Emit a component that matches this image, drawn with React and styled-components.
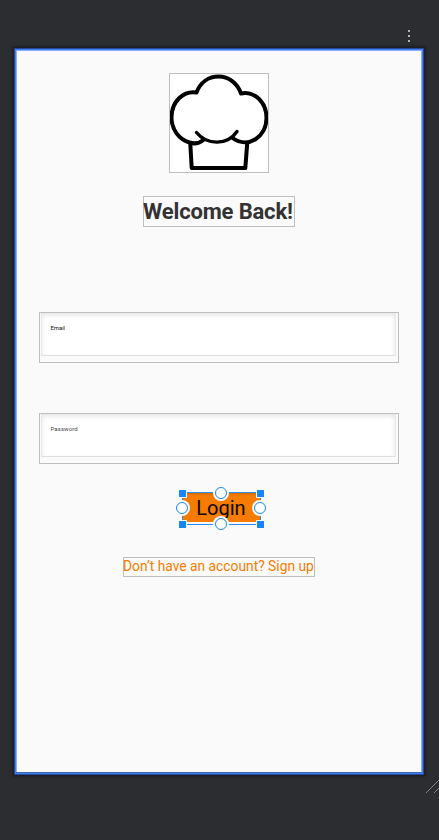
import React from "react";
import styled, { createGlobalStyle } from "styled-components";

const GlobalStyle = createGlobalStyle`
  *, *::before, *::after { box-sizing: border-box; }
  body { margin: 0; background: #2b2d30; font-family: Roboto, sans-serif; }
`;

const Workspace = styled.main`
  position: relative;
  width: 439px;
  height: 840px;
  overflow: hidden;
  display: flex;
  flex-direction: column;
  background: #2b2d30;
`;

const Toolbar = styled.header`
  height: 48px;
  flex: none;
  display: flex;
  justify-content: flex-end;
  padding: 30px 29px 0 0;
`;

const KebabMenu = styled.div`
  width: 2px;
  display: flex;
  flex-direction: column;
  gap: 3px;
`;

const Dot = styled.i`
  width: 2px;
  height: 2px;
  background: #b4b5b7;
`;

const Screen = styled.section`
  width: 410px;
  height: 727px;
  flex: none;
  margin-left: 14px;
  padding: 24px 24px 0;
  display: flex;
  flex-direction: column;
  align-items: center;
  background: #fafafa;
  border: 1px solid #25499a;
  box-shadow: 0 0 0 1px #1b1f29, 0 0 3px 1px #17191c,
    inset 0 0 0 1px #427ff0, inset 0 -2px 0 #3a66b5,
    inset 2px 2px 0 #86aefa, inset -2px 0 0 #86aefa;
`;

const Outlined = styled.div`
  width: ${(p) => p.$w}px;
  height: ${(p) => p.$h}px;
  margin-top: ${(p) => p.$gap || 0}px;
  flex: none;
  border: 1px solid #bebebe;
`;

const LogoFrame = styled(Outlined)`
  background: #fff;
  svg { display: block; }
`;

const Title = styled(Outlined).attrs({ as: "h1" })`
  margin-bottom: 0;
  color: #333;
  font-size: 22px;
  line-height: 29px;
  font-weight: 700;
  letter-spacing: -0.16px;
  white-space: nowrap;
  text-indent: -1px;
`;

const Field = styled(Outlined)`
  padding: 0 2px 6px 1px;
`;

const Entry = styled.div`
  height: 43px;
  padding: 11px 0 0 9px;
  background: #fff;
  border: 1px solid #e8e8e8;
  border-width: 0 1px 1px;
  border-bottom-color: #e0e0e0;
  box-shadow: inset 0 4px 5px -2px #e3e3e3, inset 3px 0 4px -2px #f3f3f3,
    inset -3px 0 4px -2px #f0f0f0;
  color: ${(p) => p.$color};
  font-size: 6px;
  line-height: 8px;
  letter-spacing: ${(p) => p.$tracking}px;
  text-indent: -0.5px;
`;

const LoginButton = styled.button`
  position: relative;
  width: 79px;
  height: 33px;
  margin: 28px 0 0 4px;
  padding: 0;
  flex: none;
  border: 1px solid #2b8cf0;
  background: linear-gradient(#d66c00 0, #f57c00 3px, #f57c00 29px, #fafafa 29px);
  color: #0b0600;
  font: 20px/31px Roboto, sans-serif;
`;

const Handle = styled.i`
  position: absolute;
  left: ${(p) => p.$x}px;
  top: ${(p) => p.$y}px;
  width: 9px;
  height: 9px;
  background: #1886f7;
  border: 1px solid #fafafa;
`;

const RoundHandle = styled(Handle)`
  width: 12px;
  height: 12px;
  border: 1px solid #1688e8;
  border-radius: 50%;
  background: #fff;
  box-shadow: 0 0 0 2px #fafafa;
`;

const SignUp = styled(Outlined)`
  color: #f57c00;
  font-size: 13.8px;
  line-height: 17px;
  white-space: nowrap;
  text-indent: -1px;
`;

const ResizeGrip = styled.svg`
  position: absolute;
  right: 0;
  top: 779px;
`;

function ChefHat() {
  return (
    <svg width="98" height="98" viewBox="170 74 98 98" fill="none" stroke="#000" strokeWidth="4" strokeLinecap="round" strokeLinejoin="round">
      <path d="M203 140.2C199 143.5 194 144 189.5 142.5C179 139.5 171.5 129.5 171.5 117.5C171.5 101 184 90.5 196.5 92.5C200.5 82 209 76.5 218.5 76.5C228.5 76.5 237.5 83 241 93.5C254.5 91 266.5 102 266.5 118C266.5 136.5 248.5 149.5 232.5 138" />
      <path d="M196.5 132.5C207 145.5 227.5 145.5 237 131.5" strokeWidth="3.4" />
      <path d="M190.3 143.5L191.7 168H245.3L247.2 143.5" />
    </svg>
  );
}

export default function App() {
  return (
    <>
      <GlobalStyle />
      <Workspace>
        <Toolbar>
          <KebabMenu><Dot /><Dot /><Dot /></KebabMenu>
        </Toolbar>
        <Screen>
          <LogoFrame $w={100} $h={100}><ChefHat /></LogoFrame>
          <Title $w={152} $h={31} $gap={23}>Welcome Back!</Title>
          <Field $w={360} $h={51} $gap={85}>
            <Entry $color="#111" $tracking={-0.1}>Email</Entry>
          </Field>
          <Field $w={360} $h={51} $gap={50}>
            <Entry $color="#444" $tracking={0.1}>Password</Entry>
          </Field>
          <LoginButton>
            Login
            <Handle $x={-5} $y={-4} />
            <Handle $x={73} $y={-4} />
            <Handle $x={-5} $y={27} />
            <Handle $x={73} $y={27} />
            <RoundHandle $x={32} $y={-6} />
            <RoundHandle $x={-7} $y={9} />
            <RoundHandle $x={71} $y={9} />
            <RoundHandle $x={32} $y={25} />
          </LoginButton>
          <SignUp $w={192} $h={20} $gap={32}>Don’t have an account? Sign up</SignUp>
        </Screen>
        <ResizeGrip width="14" height="15" stroke="#999b9e" strokeWidth="0.8">
          <path d="M1 14L15 0M9 14L15 8" />
        </ResizeGrip>
      </Workspace>
    </>
  );
}
